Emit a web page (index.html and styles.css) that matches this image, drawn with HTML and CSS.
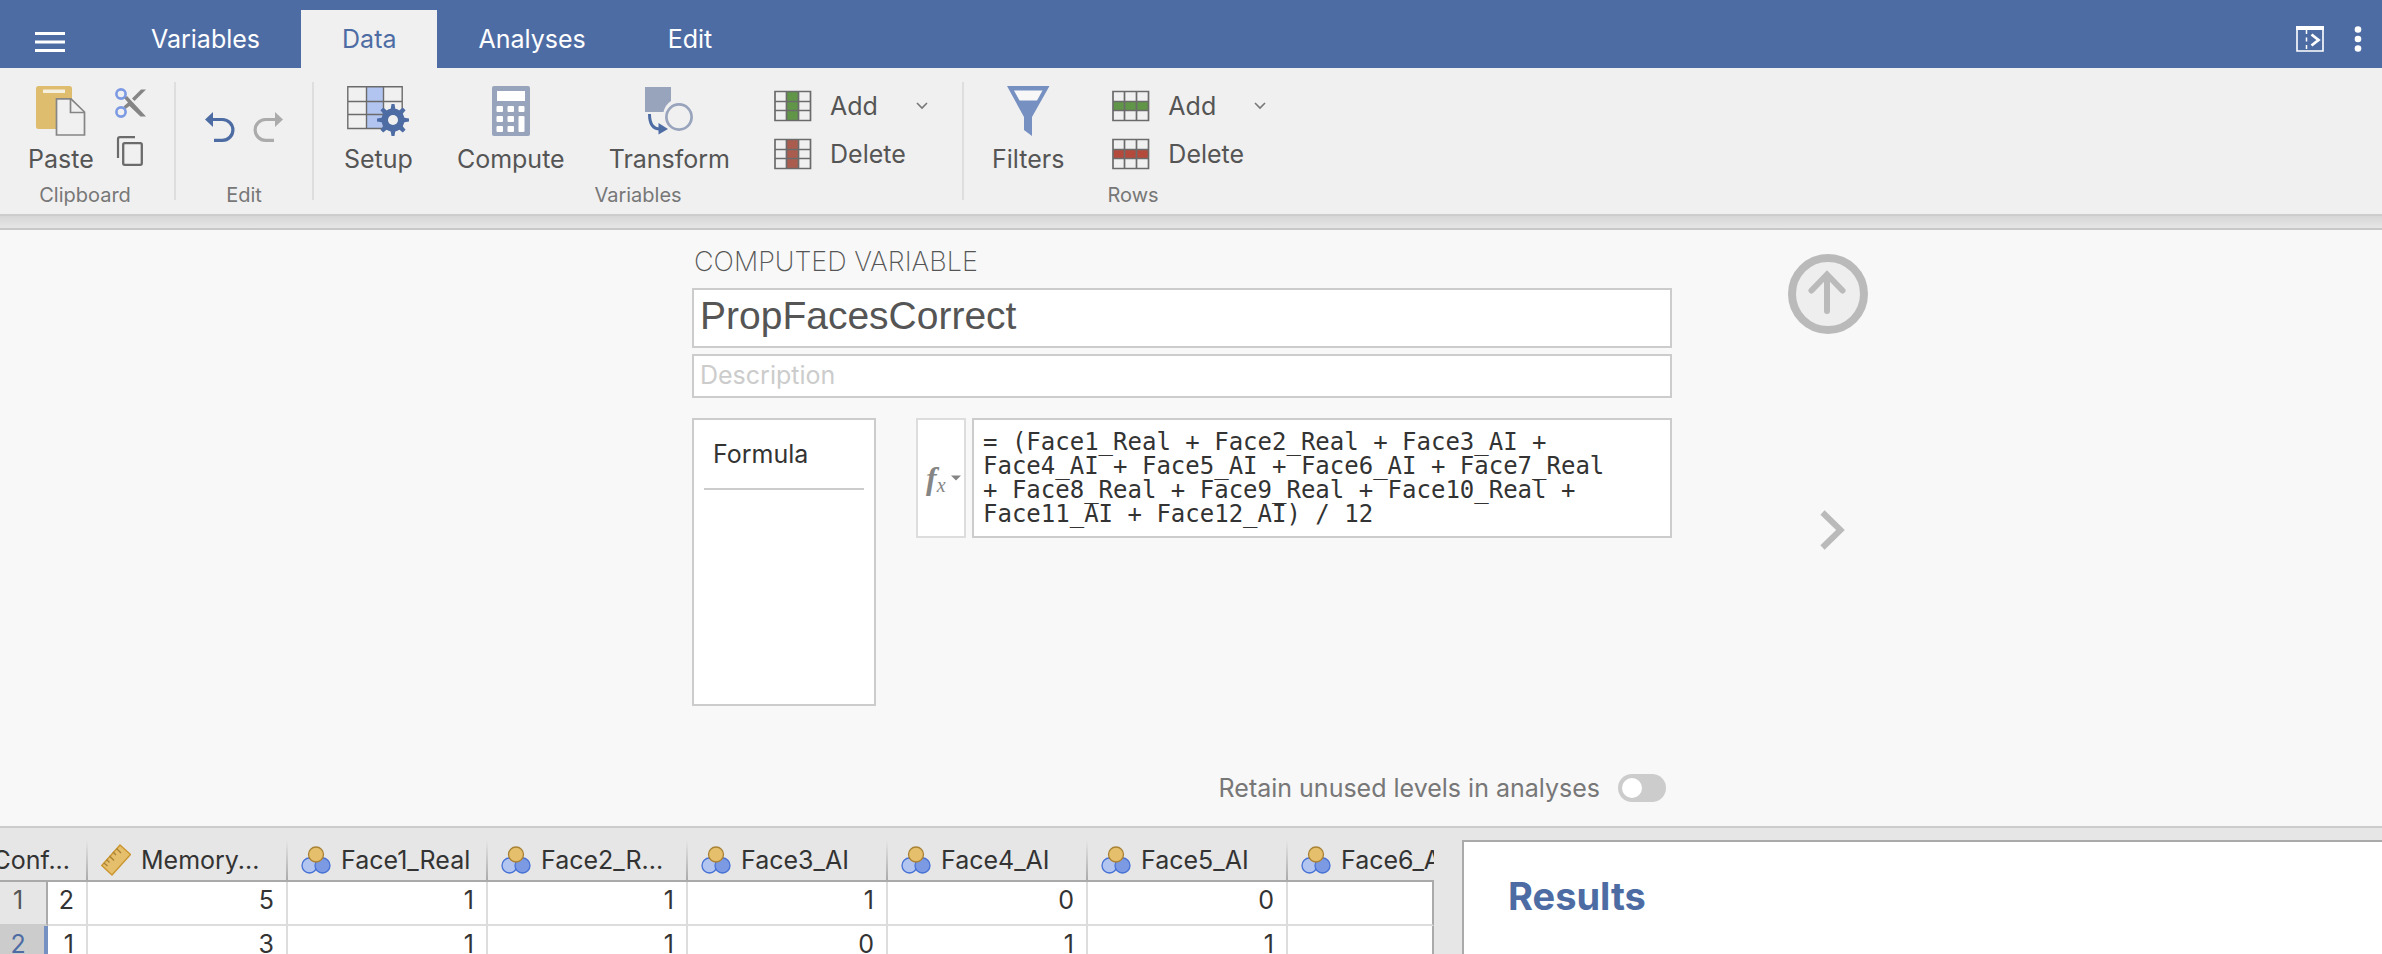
FILE: index.html
```html
<!DOCTYPE html>
<html lang="en">
<head>
<meta charset="utf-8">
<title>PropFacesCorrect</title>
<link rel="stylesheet" href="styles.css">
</head>
<body>
<svg class="defs" aria-hidden="true">
  <symbol id="nominal" viewBox="0 0 30 28">
    <circle cx="8.5" cy="19.5" r="7.5" fill="#b1c5f0" stroke="#4671d5" stroke-width="1.3"/>
    <circle cx="21.5" cy="19.5" r="7.5" fill="#7b9ae3" stroke="#4671d5" stroke-width="1.3"/>
    <circle cx="15" cy="8.5" r="7.5" fill="#e5bf6c" stroke="#a98235" stroke-width="1.3"/>
  </symbol>
  <symbol id="cells" viewBox="0 0 38 32"><path d="M1 1.500H37V30.500H1Z" fill="#f0f0f0"/></symbol>
  <symbol id="lines" viewBox="0 0 38 32">
    <path d="M1 1.500H36.500V30.500H1ZM12.500 1V31M24.500 1V31M1 11.500H37M1 20.500H37" fill="none" stroke="#6b6b6b" stroke-width="1.700"/>
  </symbol>
  <symbol id="caret" viewBox="0 0 12 8"><path d="M1 1L6 6L11 1" fill="none" stroke="#777" stroke-width="1.600"/></symbol>
</svg>

<header class="topbar">
  <button class="menu" type="button" aria-label="Menu">
    <svg width="30" height="20" viewBox="0 0 30 20"><path d="M0 1.500H30M0 10H30M0 18.500H30" stroke="#fff" stroke-width="2.800"/></svg>
  </button>
  <nav class="tabs">
    <button class="tab" type="button">Variables</button>
    <button class="tab active" type="button">Data</button>
    <button class="tab" type="button">Analyses</button>
    <button class="tab" type="button">Edit</button>
  </nav>
  <div class="top-actions">
    <button type="button" aria-label="Toggle results">
      <svg width="28" height="26" viewBox="0 0 28 26"><path d="M1 1V25H27V1" fill="none" stroke="#fff" stroke-width="1.600"/><path d="M0 2H28" stroke="#fff" stroke-width="4"/><path d="M10.500 4V25" stroke="#fff" stroke-width="1.500" stroke-dasharray="4 3.500"/><path d="M15.500 8.500L22.500 14L15.500 19.500" fill="none" stroke="#fff" stroke-width="2.800"/></svg>
    </button>
    <button type="button" aria-label="More">
      <svg width="8" height="26" viewBox="0 0 8 26" fill="#fff"><circle cx="4" cy="3.500" r="3.300"/><circle cx="4" cy="13" r="3.300"/><circle cx="4" cy="22.500" r="3.300"/></svg>
    </button>
  </div>
</header>

<div class="ribbon">
  <section class="group clipboard">
    <div class="tools">
      <button class="tool" type="button">
        <svg width="50" height="50" viewBox="0 0 50 50"><rect width="36" height="43" rx="2.500" fill="#dfbd6f"/><rect x="7" y="3.500" width="22" height="3.500" fill="#f6f0e0"/><path d="M20.500 12.800H35L48.500 26V49H20.500Z" fill="#f0f0f0" stroke="#858585" stroke-width="1.700"/><path d="M34.500 13V26.500H48.500" fill="none" stroke="#858585" stroke-width="1.700"/></svg>
        <span>Paste</span>
      </button>
      <div class="mini">
        <button type="button" aria-label="Cut">
          <svg width="32" height="30" viewBox="0 0 32 30"><path d="M9 10L12 8L31 28.500H25.500L14.500 18L10.500 21L8.500 18.500L13 14.500Z" fill="#858585"/><path d="M17 10.500L26 1.500H31L19.500 13Z" fill="#858585"/><circle cx="6" cy="6" r="4.600" fill="none" stroke="#7b9ae3" stroke-width="2.600"/><circle cx="6" cy="24" r="4.600" fill="none" stroke="#7b9ae3" stroke-width="2.600"/></svg>
        </button>
        <button type="button" aria-label="Copy">
          <svg width="32" height="30" viewBox="0 0 32 30"><rect x="8.200" y="7.200" width="18.600" height="21.600" rx="1.500" fill="none" stroke="#6b6b6b" stroke-width="2.300"/><path d="M3 22V3Q3 1.200 5 1.200H20" fill="none" stroke="#6b6b6b" stroke-width="2.200"/></svg>
        </button>
      </div>
    </div>
    <h2>Clipboard</h2>
  </section>
  <section class="group edit">
    <div class="tools">
      <button type="button" aria-label="Undo">
        <svg width="30" height="30" viewBox="0 0 30 30"><path d="M0 7.500L8 0V15Z" fill="#4e6ca4"/><path d="M6 7.500H17.500A10.400 10.400 0 0 1 17.500 28.300H9" fill="none" stroke="#4e6ca4" stroke-width="3.200"/></svg>
      </button>
      <button type="button" aria-label="Redo">
        <svg width="30" height="30" viewBox="0 0 30 30"><path d="M30 7.500L22 0V15Z" fill="#ababab"/><path d="M24 7.500H12.500A10.400 10.400 0 0 0 12.500 28.300H21" fill="none" stroke="#ababab" stroke-width="3.200"/></svg>
      </button>
    </div>
    <h2>Edit</h2>
  </section>
  <section class="group variables">
    <div class="tools">
      <button class="tool" type="button">
        <svg width="62" height="50" viewBox="0 0 62 50"><rect x="19" y="1" width="17.500" height="41.500" fill="#b1c5f0"/><path d="M.8.800H55.200V42.500H.8ZM19.500 1V42.500M36.500 1V42.500M1 15.500H55M1 28.500H55" fill="none" stroke="#6b6b6b" stroke-width="1.400"/><g fill="#4e6ca4"><circle cx="46" cy="34" r="11.500"/><path d="M43.500 24L44.500 18H47.500L48.500 24ZM43.500 44L44.500 50H47.500L48.500 44ZM36 31.500L30 32.500V35.500L36 36.500ZM56 31.500L62 32.500V35.500L56 36.500Z"/><path d="M43.500 24L44 18.200H48L48.500 24ZM43.500 44L44 49.800H48L48.500 44ZM36 31.500L30.200 32V36L36 36.500ZM56 31.500L61.800 32V36L56 36.500Z" transform="rotate(45 46 34)"/></g><circle cx="46" cy="34" r="5" fill="#f0f0f0"/></svg>
        <span>Setup</span>
      </button>
      <button class="tool" type="button">
        <svg width="38" height="50" viewBox="0 0 38 50"><rect width="38" height="50" rx="2" fill="#98a3bc"/><g fill="#fff"><rect x="5" y="5" width="28" height="10"/><rect x="4.500" y="20" width="6.500" height="6" rx="1"/><rect x="15.500" y="20" width="6.500" height="6" rx="1"/><rect x="26.500" y="20" width="6" height="6" rx="1"/><rect x="4.500" y="30" width="6.500" height="6" rx="1"/><rect x="15.500" y="30" width="6.500" height="6" rx="1"/><rect x="26.500" y="30" width="6" height="16" rx="1"/><rect x="4.500" y="40" width="6.500" height="6" rx="1"/><rect x="15.500" y="40" width="6.500" height="6" rx="1"/></g></svg>
        <span>Compute</span>
      </button>
      <button class="tool" type="button">
        <svg width="48" height="50" viewBox="0 0 48 50"><path d="M0 1H26V15A18 18 0 0 0 18.500 26H0Z" fill="#98a3bc"/><circle cx="34" cy="31" r="12.600" fill="none" stroke="#98a3bc" stroke-width="2.700"/><path d="M4.500 28C4.500 38 8 43 15 43" fill="none" stroke="#4e6ca4" stroke-width="3"/><path d="M13.500 37L23 43L13.500 48.500Z" fill="#4e6ca4"/></svg>
        <span>Transform</span>
      </button>
      <div class="pair">
        <button type="button"><svg width="38" height="32"><use href="#cells"/><rect x="12.500" y="1" width="12" height="30" fill="#619547"/><use href="#lines"/></svg><span>Add</span><svg class="caret" width="12" height="8"><use href="#caret"/></svg></button>
        <button type="button"><svg width="38" height="32"><use href="#cells"/><rect x="12.500" y="1" width="12" height="30" fill="#aa5d4f"/><use href="#lines"/></svg><span>Delete</span></button>
      </div>
    </div>
    <h2>Variables</h2>
  </section>
  <section class="group rows">
    <div class="tools">
      <button class="tool" type="button">
        <svg width="44" height="50" viewBox="0 0 44 50"><path d="M1 0H43.500L26 31V50L18 44V31Z" fill="#7690c2"/><path d="M8 4.500H36.500L31 14.500H13.500Z" fill="#f7f7f7"/></svg>
        <span>Filters</span>
      </button>
      <div class="pair">
        <button type="button"><svg width="38" height="32"><use href="#cells"/><rect x="1" y="11.500" width="36" height="9" fill="#619547"/><use href="#lines"/></svg><span>Add</span><svg class="caret" width="12" height="8"><use href="#caret"/></svg></button>
        <button type="button"><svg width="38" height="32"><use href="#cells"/><rect x="1" y="11.500" width="36" height="9" fill="#b44a3c"/><use href="#lines"/></svg><span>Delete</span></button>
      </div>
    </div>
    <h2>Rows</h2>
  </section>
</div>
<div class="shade"></div>

<main class="editor">
  <div class="panel">
    <h1>COMPUTED VARIABLE</h1>
    <input class="name" type="text" value="PropFacesCorrect" aria-label="Variable name">
    <input class="description" type="text" placeholder="Description" aria-label="Description">
    <div class="body">
      <div class="levels"><div class="levels-title">Formula</div></div>
      <div class="formula">
        <button class="fx" type="button" aria-label="Functions"><span class="f">f</span><span class="x">x</span><svg width="10" height="6" viewBox="0 0 10 6"><path d="M0 .5H10L5 5.500Z" fill="#858585"/></svg></button>
        <textarea aria-label="Formula" spellcheck="false" rows="4">= (Face1_Real + Face2_Real + Face3_AI + Face4_AI + Face5_AI + Face6_AI + Face7_Real + Face8_Real + Face9_Real + Face10_Real + Face11_AI + Face12_AI) / 12</textarea>
      </div>
    </div>
    <label class="retain"><span>Retain unused levels in analyses</span><input type="checkbox" role="switch"></label>
  </div>
  <div class="side">
    <button class="up" type="button" aria-label="Close editor">
      <svg width="80" height="80" viewBox="0 0 80 80"><circle cx="40" cy="40" r="36" fill="#eee" stroke="#bababa" stroke-width="8"/><path d="M39 57V21M23.500 36.500L39 20.500L54.500 36.500" fill="none" stroke="#bababa" stroke-width="6" stroke-linecap="round"/></svg>
    </button>
    <button class="next" type="button" aria-label="Next variable">
      <svg width="26" height="40" viewBox="0 0 26 40"><path d="M2.500 2.500L20.500 20L2.500 37.500" fill="none" stroke="#bababa" stroke-width="6"/></svg>
    </button>
  </div>
</main>

<div class="workspace">
  <div class="sheet">
    <table>
      <colgroup><col class="c-num"><col class="c-first"><col><col><col><col><col><col><col class="c-last"></colgroup>
      <thead>
        <tr>
          <th class="clip" colspan="2"><div>Conf...</div></th>
          <th><div><svg width="30" height="32" viewBox="0 0 30 32"><path d="M19 1L29.500 10.500L11 31L.8 21.500Z" fill="#e5bf6c" stroke="#cb9630" stroke-width="1.400"/><path d="M15.500 4.500L20 9M12 8L15 11M8.500 12L13 16.500M5.500 15.500L8.500 18.500M3 19L6.500 22" stroke="#a98235" stroke-width="1.400"/></svg>Memory...</div></th>
          <th><div><svg width="30" height="28"><use href="#nominal"/></svg>Face1_Real</div></th>
          <th><div><svg width="30" height="28"><use href="#nominal"/></svg>Face2_R...</div></th>
          <th><div><svg width="30" height="28"><use href="#nominal"/></svg>Face3_AI</div></th>
          <th><div><svg width="30" height="28"><use href="#nominal"/></svg>Face4_AI</div></th>
          <th><div><svg width="30" height="28"><use href="#nominal"/></svg>Face5_AI</div></th>
          <th><div><svg width="30" height="28"><use href="#nominal"/></svg>Face6_AI</div></th>
        </tr>
      </thead>
      <tbody>
        <tr><th>1</th><td>2</td><td>5</td><td>1</td><td>1</td><td>1</td><td>0</td><td>0</td><td></td></tr>
        <tr class="selected"><th>2</th><td>1</td><td>3</td><td>1</td><td>1</td><td>0</td><td>1</td><td>1</td><td></td></tr>
      </tbody>
    </table>
  </div>
  <section class="results"><h2>Results</h2></section>
</div>
</body>
</html>
```
FILE: styles.css
```css
* { box-sizing: border-box; }
html, body { height: 100%; }
body {
  margin: 0;
  display: flex;
  flex-direction: column;
  overflow: hidden;
  background: #f8f8f8;
  color: #333;
  font: 25px/32px Inter, "Liberation Sans", sans-serif;
}
button {
  border: 0;
  padding: 0;
  background: none;
  color: inherit;
  font: inherit;
}
svg { display: block; flex: none; }
h1, h2 { margin: 0; font-weight: 400; }
.defs { position: absolute; width: 0; height: 0; }

.topbar {
  flex: none;
  display: flex;
  height: 68px;
  padding: 10px 20px 0 35px;
  background: #4e6ca4;
}
.menu { align-self: center; padding-top: 6px; margin-right: 45px; }
.tabs { display: flex; }
.tab { padding: 0 41px; color: #fff; }
.tab.active { background: #f0f0f0; color: #4e6ca4; }
.top-actions { display: flex; gap: 30px; align-items: center; margin-left: auto; }

.ribbon {
  flex: none;
  display: flex;
  padding: 14px 0;
  border-bottom: 2px solid #ccc;
  background: #f0f0f0;
  color: #555;
}
.group { height: 118px; padding-top: 4px; border-right: 2px solid #dedede; }
.group.rows { border: 0; }
.group h2 { color: #777; font-size: 20px; line-height: 24px; text-align: center; }
.tools { display: flex; height: 97px; }
.tool { display: flex; flex-direction: column; align-items: center; gap: 7px; }
.clipboard { width: 176px; }
.clipboard h2 { padding-right: 4px; }
.clipboard .tools { gap: 21px; padding-left: 28px; }
.mini { display: flex; flex-direction: column; gap: 18px; padding-top: 2px; }
.edit { width: 138px; }
.edit .tools { gap: 18px; justify-content: center; align-items: center; padding-bottom: 16px; }
.variables { width: 650px; }
.variables .tools { gap: 44px; padding-left: 30px; }
.rows { width: 338px; }
.rows .tools { gap: 48px; padding-left: 28px; }
.pair { display: flex; flex-direction: column; gap: 16px; padding-top: 4px; }
.pair button { display: flex; align-items: center; gap: 18px; height: 32px; }
.pair .caret { margin-left: 20px; }
.shade { flex: none; height: 14px; border-bottom: 2px solid #c8c8c8; background: linear-gradient(#d6d6d6, #e6e6e6); }

.editor {
  flex: none;
  display: grid;
  grid-template-columns: 1fr minmax(0, 980px) 1fr;
  padding-right: 18px;
  border-bottom: 2px solid #ccc;
}
.panel { grid-column: 2; padding: 16px 0 22px; }
.panel h1 { padding-left: 2px; font-size: 27px; font-weight: 200; line-height: 32px; color: #555; }
.name, .description, textarea {
  display: block;
  width: 100%;
  border: 2px solid #ccc;
  border-radius: 0;
  outline: 0;
  background: #fff;
}
.name { height: 60px; margin-top: 10px; padding: 0 6px 4px; color: #555; font: 39px "Liberation Sans", sans-serif; }
.description { height: 44px; margin-top: 6px; padding: 0 6px 2px; font: inherit; }
.description::placeholder { color: #ccc; }
.body { display: flex; gap: 40px; margin-top: 20px; }
.levels { width: 184px; height: 288px; padding: 18px 10px; border: 2px solid #ccc; background: #fff; }
.levels-title { padding: 0 9px 18px; border-bottom: 2px solid #ccc; }
.formula { flex: 1; display: flex; gap: 6px; align-items: flex-start; }
.fx {
  display: flex;
  align-items: center;
  width: 50px;
  height: 120px;
  padding-left: 8px;
  border: 2px solid #ddd;
  background: #fff;
  color: #858585;
  font: italic 32px "Liberation Serif", serif;
}
.fx .f { font-weight: 700; }
.fx .x { padding-top: 14px; font-size: 20px; }
.fx svg { margin-left: 5px; }
textarea {
  flex: 1;
  height: 120px;
  padding: 10px 50px 10px 9px;
  overflow: hidden;
  resize: none;
  color: #333;
  font: 24px/24px "DejaVu Sans Mono", monospace;
}
.retain { display: flex; justify-content: flex-end; align-items: center; gap: 18px; margin-top: 66px; padding-right: 6px; color: #777; }
.retain input {
  appearance: none;
  width: 48px;
  height: 28px;
  margin: 0;
  padding: 4px;
  border-radius: 14px;
  background: #ccc;
}
.retain input::before { content: ""; display: block; width: 20px; height: 20px; border-radius: 50%; background: #fff; }
.side { display: flex; flex-direction: column; align-items: flex-start; padding: 24px 0 0 116px; }
.next { margin: 176px 0 0 32px; }

.workspace { flex: 1; min-height: 0; display: flex; background: #e6e6e6; }
.sheet { flex: none; width: 1434px; padding-top: 12px; overflow: hidden; }
table { width: 1434px; border-collapse: separate; border-spacing: 0; table-layout: fixed; }
col { width: 200px; }
.c-num { width: 48px; }
.c-first { width: 40px; }
.c-last { width: 146px; }
thead th {
  height: 42px;
  padding: 0;
  overflow: hidden;
  border-bottom: 2px solid #aaa;
  background: linear-gradient(#e6e6e6, #aaa) right / 2px 100% no-repeat;
  font-weight: 400;
  text-align: left;
}
thead th:last-child { background: none; }
thead div { display: flex; align-items: center; gap: 10px; padding-left: 13px; white-space: nowrap; }
thead .clip div { padding-right: 18px; justify-content: flex-end; }
tbody td, tbody th { height: 44px; padding: 0 12px 6px 0; border: solid #ddd; border-width: 0 2px 2px 0; background: #fff; text-align: right; font-weight: 400; }
tbody td:last-child { border-right-color: #aaa; }
tbody th { padding-right: 10px; border-right-color: #aaa; border-bottom-color: #ccc; background: #e6e6e6; color: #555; text-align: center; }
.selected th { padding-right: 8px; border-right: 4px solid #7690c2; background: #ccc; color: #4e6ca4; }
.results { flex: 1; margin: 12px 0 0 28px; padding: 34px 44px; border: solid #aaa; border-width: 2px 0 0 2px; background: #fff; }
.results h2 { color: #4e6ca4; font-size: 38px; font-weight: 700; line-height: 40px; }
```
